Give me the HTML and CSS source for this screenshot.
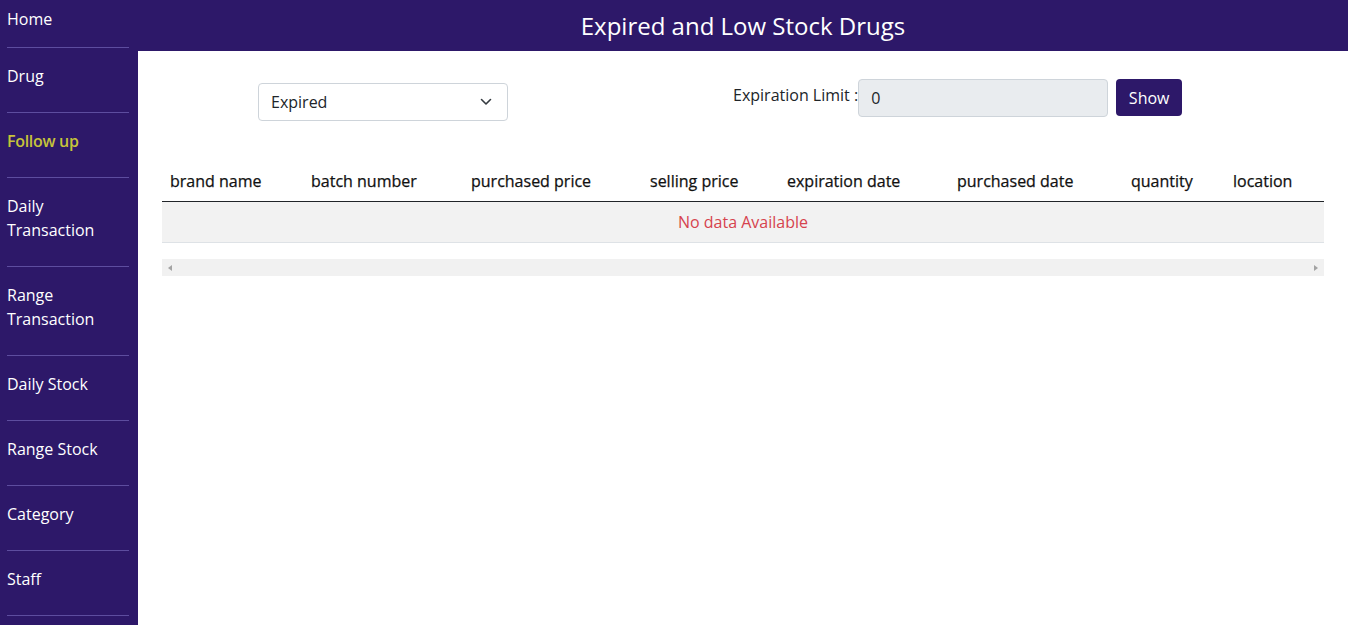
FILE: index.html
```html
<!DOCTYPE html>
<html lang="en">
<head>
<meta charset="utf-8">
<title>Expired and Low Stock Drugs</title>
<link rel="stylesheet" href="styles.css">
</head>
<body>
<div class="layout">
  <nav class="sidebar">
    <a class="nav-item first" href="#">Home</a>
    <a class="nav-item" href="#">Drug</a>
    <a class="nav-item active" href="#">Follow up</a>
    <a class="nav-item" href="#">Daily<br>Transaction</a>
    <a class="nav-item" href="#">Range<br>Transaction</a>
    <a class="nav-item" href="#">Daily Stock</a>
    <a class="nav-item" href="#">Range Stock</a>
    <a class="nav-item" href="#">Category</a>
    <a class="nav-item" href="#">Staff</a>
  </nav>
  <main class="main">
    <header class="topbar"><h1 class="title">Expired and Low Stock Drugs</h1></header>
    <section class="content">
      <div class="filters">
        <div class="select">
          <span>Expired</span>
          <svg class="chev" width="12" height="8" viewBox="0 0 12 8"><path d="M1.5 1.5 L6 6 L10.5 1.5" fill="none" stroke="#343a40" stroke-width="1.6" stroke-linecap="round" stroke-linejoin="round"/></svg>
        </div>
        <div class="limit">
          <label class="limit-label">Expiration Limit :</label>
          <div class="limit-input">0</div>
          <button class="btn">Show</button>
        </div>
      </div>
      <div class="table-wrap">
        <table class="tbl">
          <thead>
            <tr>
              <th class="c1">brand name</th>
              <th class="c2">batch number</th>
              <th class="c3">purchased price</th>
              <th class="c4">selling price</th>
              <th class="c5">expiration date</th>
              <th class="c6">purchased date</th>
              <th class="c7">quantity</th>
              <th class="c8">location</th>
            </tr>
          </thead>
          <tbody>
            <tr><td class="empty" colspan="8">No data Available</td></tr>
          </tbody>
        </table>
        <div class="hscroll">
          <span class="arrow left"></span>
          <span class="arrow right"></span>
        </div>
      </div>
    </section>
  </main>
</div>
</body>
</html>
```
FILE: styles.css
```css
html, body {
  margin: 0;
  padding: 0;
  background: #fff;
  font-family: "Open Sans", "Noto Sans", sans-serif;
  color: #212529;
}
.layout {
  display: flex;
  min-height: 625px;
}
.sidebar {
  width: 138px;
  flex: 0 0 138px;
  background: #2d1869;
  padding: 0 9px 0 7px;
  box-sizing: border-box;
  display: flex;
  flex-direction: column;
}
.nav-item {
  display: block;
  color: #fff;
  text-decoration: none;
  font-size: 16px;
  line-height: 24px;
  padding: 16px 0 24px;
  border-bottom: 1px solid #5d4d9f;
}
.nav-item.first {
  padding: 7px 0 16px;
}
.nav-item.active {
  color: #c6c33a;
  font-weight: 600;
  letter-spacing: -0.3px;
}
.main {
  flex: 1 1 auto;
  min-width: 0;
  display: flex;
  flex-direction: column;
}
.topbar {
  background: #2d1869;
  height: 51px;
  display: flex;
  align-items: center;
  justify-content: center;
}
.title {
  margin: 0;
  color: #fff;
  font-size: 24px;
  font-weight: 400;
  line-height: 32px;
}
.content {
  padding: 28px 24px 0;
}
.filters {
  display: flex;
  align-items: flex-start;
  padding-left: 96px;
}
.select {
  margin-top: 4px;
  width: 250px;
  height: 38px;
  box-sizing: border-box;
  border: 1px solid #ced4da;
  border-radius: 4px;
  display: flex;
  align-items: center;
  justify-content: space-between;
  padding: 0 15px 0 12px;
  font-size: 16px;
  color: #212529;
}
.limit {
  display: flex;
  align-items: flex-start;
  margin-left: 225px;
}
.limit-label {
  font-size: 16px;
  line-height: 24px;
  margin-top: 4px;
  margin-right: 0;
  color: #212529;
}
.limit-input {
  width: 250px;
  height: 38px;
  box-sizing: border-box;
  background: #e9ecef;
  border: 1px solid #ced4da;
  border-radius: 4px;
  padding: 0 12px;
  font-size: 16px;
  line-height: 36px;
  color: #212529;
}
.btn {
  margin-left: 8px;
  height: 37px;
  width: 66px;
  background: #2d1869;
  color: #fff;
  border: 0;
  border-radius: 4px;
  font-family: inherit;
  font-size: 16px;
  padding: 0;
}
.table-wrap {
  margin-top: 40px;
}
.tbl {
  width: 100%;
  border-collapse: collapse;
  table-layout: fixed;
}
.tbl th {
  box-sizing: border-box;
  text-align: left;
  font-weight: 500;
  font-size: 16px;
  line-height: 24px;
  padding: 8px 8px 8px;
  border-bottom: 1px solid #212529;
  white-space: nowrap;
  color: #111;
  -webkit-text-stroke: 0.25px #111;
}
.c1 { width: 141px; }
.c2 { width: 160px; }
.c3 { width: 179px; }
.c4 { width: 137px; }
.c5 { width: 170px; }
.c6 { width: 174px; }
.c7 { width: 102px; }
.c8 { width: 99px; }
.tbl td.empty {
  background: #f2f2f2;
  color: #d6434e;
  text-align: center;
  font-size: 16px;
  line-height: 24px;
  padding: 8px;
  border-bottom: 1px solid #dee2e6;
}
.hscroll {
  margin-top: 16px;
  height: 17px;
  background: #f1f1f1;
  display: flex;
  align-items: center;
  justify-content: space-between;
  padding: 0 6px;
}
.arrow {
  width: 0;
  height: 0;
  border-top: 3px solid transparent;
  border-bottom: 3px solid transparent;
}
.arrow.left { border-right: 4px solid #a3a3a3; }
.arrow.right { border-left: 4px solid #a3a3a3; }
```
